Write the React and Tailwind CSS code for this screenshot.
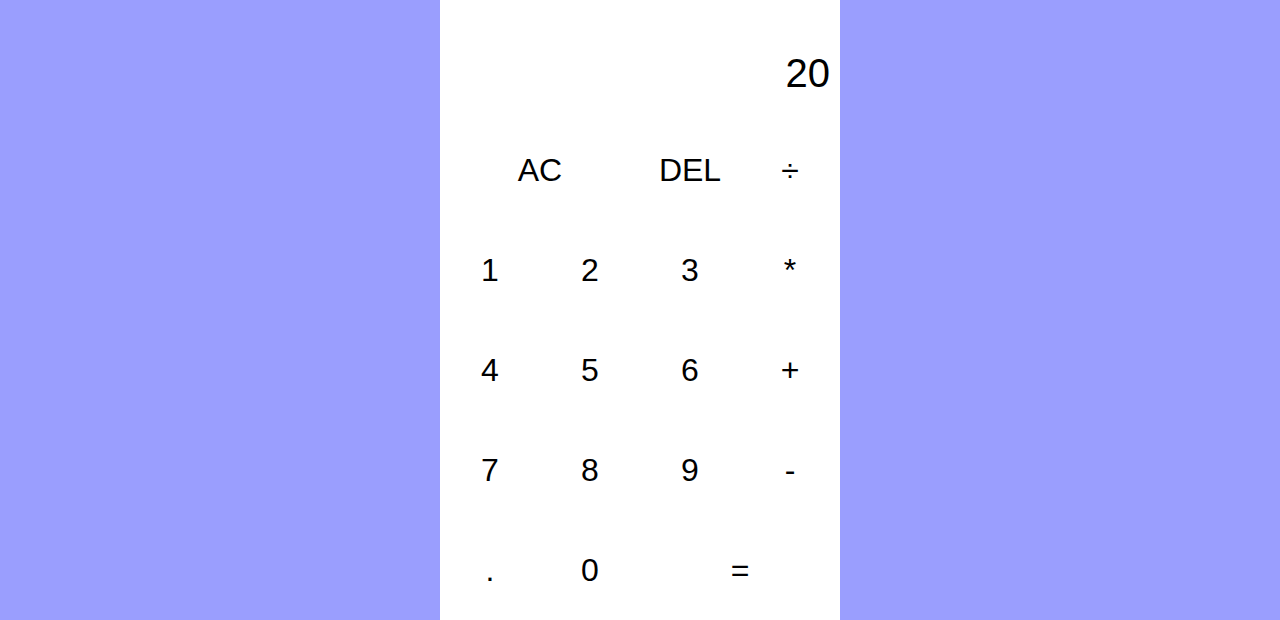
const keys = [
  { label: 'AC', span: 'col-span-2' },
  { label: 'DEL' },
  { label: '÷' },
  { label: '1' },
  { label: '2' },
  { label: '3' },
  { label: '*' },
  { label: '4' },
  { label: '5' },
  { label: '6' },
  { label: '+' },
  { label: '7' },
  { label: '8' },
  { label: '9' },
  { label: '-' },
  { label: '.' },
  { label: '0' },
  { label: '=', span: 'col-span-2' },
];

export default function App() {
  return (
    <div className="min-h-screen h-[620px] bg-[#9a9efe] flex justify-center font-['Liberation_Sans',Arial,sans-serif]">
      <div className="grid grid-cols-[repeat(4,100px)] grid-rows-[120px_repeat(5,100px)] bg-white">
        {/* Display */}
        <div className="col-span-4 flex flex-col items-end justify-center pt-[36px] pb-[10px] px-[10px] text-black">
          <div className="text-[40px] leading-none break-all">20</div>
        </div>
        {keys.map((k) => (
          <button
            key={k.label}
            className={`${k.span || ''} bg-white text-black text-[32px] leading-none flex items-center justify-center outline-none`}
          >
            {k.label}
          </button>
        ))}
      </div>
    </div>
  );
}
